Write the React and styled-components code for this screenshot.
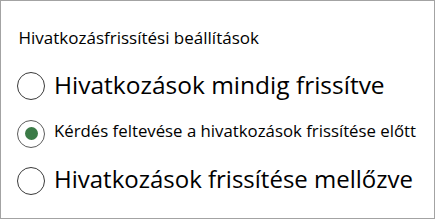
import React from "react";
import styled, { createGlobalStyle } from "styled-components";

const Global = createGlobalStyle`
  html, body { margin: 0; padding: 0; background: #ffffff; }
  * { box-sizing: border-box; }
`;

const Panel = styled.div`
  width: 435px;
  height: 219px;
  border: 1px solid #a3a3a3;
  background: #ffffff;
  padding: 27px 0 0 16px;
  font-family: "Open Sans", "Liberation Sans", Arial, sans-serif;
  color: #000;
`;

const Title = styled.div`
  font-size: 17px;
  line-height: 20px;
  padding-left: 1.5px;
  margin-bottom: 14.5px;
`;

const Group = styled.div`
  display: flex;
  flex-direction: column;
`;

const Option = styled.label`
  display: flex;
  align-items: center;
  height: 47.5px;
  gap: 9px;
  cursor: pointer;
`;

const Radio = styled.span`
  flex: none;
  width: 28px;
  height: 28px;
  border-radius: 50%;
  border: 1.5px solid ${(p) => (p.$checked ? "#5c5c5c" : "#3a3a3a")};
  display: flex;
  align-items: center;
  justify-content: center;
  &::after {
    content: "";
    width: 13px;
    height: 13px;
    border-radius: 50%;
    background: #3b7b47;
    display: ${(p) => (p.$checked ? "block" : "none")};
  }
`;

const Label = styled.span`
  font-size: ${(p) => p.$size}px;
  line-height: 1.2;
  padding-bottom: ${(p) => p.$lift}px;
  white-space: nowrap;
`;

const options = [
  { text: "Hivatkozások mindig frissítve", checked: false, size: 24.5, lift: 3 },
  { text: "Kérdés feltevése a hivatkozások frissítése előtt", checked: true, size: 16.8, lift: 4.5 },
  { text: "Hivatkozások frissítése mellőzve", checked: false, size: 24, lift: 4.5 },
];

export default function App() {
  return (
    <>
      <Global />
      <Panel>
        <Title>Hivatkozásfrissítési beállítások</Title>
        <Group role="radiogroup">
          {options.map((o) => (
            <Option key={o.text}>
              <Radio $checked={o.checked} role="radio" aria-checked={o.checked} />
              <Label $size={o.size} $lift={o.lift}>{o.text}</Label>
            </Option>
          ))}
        </Group>
      </Panel>
    </>
  );
}
